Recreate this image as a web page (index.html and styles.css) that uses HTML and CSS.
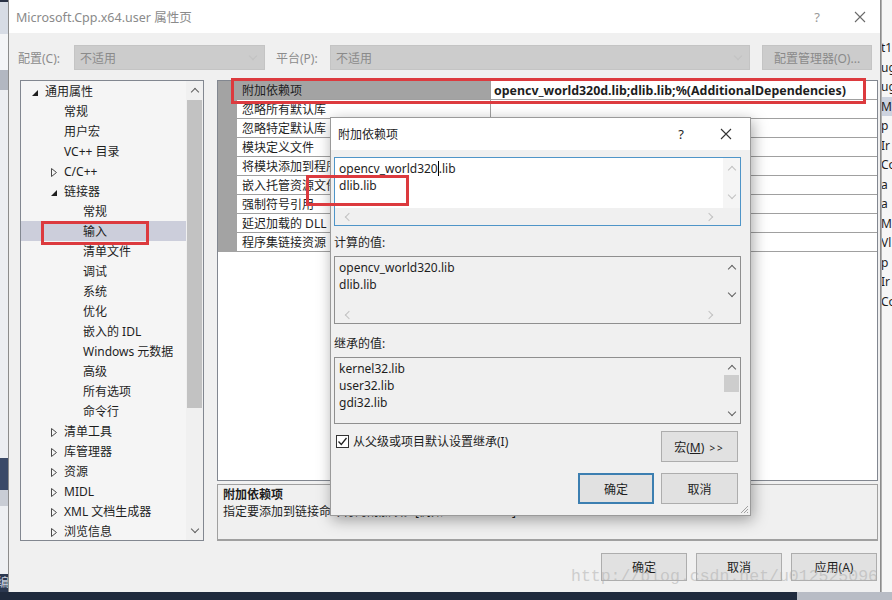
FILE: index.html
```html
<!DOCTYPE html>
<html lang="zh-CN">
<head>
    <meta charset="UTF-8">
    <title>Microsoft.Cpp.x64.user 属性页</title>
    <link rel="stylesheet" href="styles.css">
</head>
<body>
    <div class="desk">
        <div class="side-left"><span class="side-char">编</span></div>

        <!-- 属性页主窗口 -->
        <div class="win">
            <div class="titlebar">
                <span class="title">Microsoft.Cpp.x64.user 属性页</span>
                <span class="tb-help">?</span>
                <span class="tb-close">
                    <svg width="12" height="12" viewBox="0 0 12 12"><path d="M1 1L11 11M11 1L1 11" stroke="#6a6a6a" stroke-width="1.1" fill="none"/></svg>
                </span>
            </div>

            <div class="config-row">
                <span class="cfg-label">配置(C):</span>
                <div class="combo combo-config"><span>不适用</span><i class="chev chev-down chev-faint"></i></div>
                <span class="cfg-label cfg-label-p">平台(P):</span>
                <div class="combo combo-platform"><span>不适用</span><i class="chev chev-down chev-faint"></i></div>
                <button class="btn btn-off">配置管理器(O)...</button>
            </div>

            <div class="main">
                <div class="tree">
                    <ul class="tree-list">
                        <li class="lv0"><span class="slot"><i class="tri-open"></i></span>通用属性</li>
                        <li class="lv1"><span class="slot"></span>常规</li>
                        <li class="lv1"><span class="slot"></span>用户宏</li>
                        <li class="lv1"><span class="slot"></span>VC++ 目录</li>
                        <li class="lv1"><span class="slot"><svg class="tri-closed" width="6" height="9" viewBox="0 0 6 9"><path d="M0.5 0.5V8.5L5.5 4.5Z"/></svg></span>C/C++</li>
                        <li class="lv1"><span class="slot"><i class="tri-open"></i></span>链接器</li>
                        <li class="lv2"><span class="slot"></span>常规</li>
                        <li class="lv2 selected"><span class="slot"></span>输入</li>
                        <li class="lv2"><span class="slot"></span>清单文件</li>
                        <li class="lv2"><span class="slot"></span>调试</li>
                        <li class="lv2"><span class="slot"></span>系统</li>
                        <li class="lv2"><span class="slot"></span>优化</li>
                        <li class="lv2"><span class="slot"></span>嵌入的 IDL</li>
                        <li class="lv2"><span class="slot"></span>Windows 元数据</li>
                        <li class="lv2"><span class="slot"></span>高级</li>
                        <li class="lv2"><span class="slot"></span>所有选项</li>
                        <li class="lv2"><span class="slot"></span>命令行</li>
                        <li class="lv1"><span class="slot"><svg class="tri-closed" width="6" height="9" viewBox="0 0 6 9"><path d="M0.5 0.5V8.5L5.5 4.5Z"/></svg></span>清单工具</li>
                        <li class="lv1"><span class="slot"><svg class="tri-closed" width="6" height="9" viewBox="0 0 6 9"><path d="M0.5 0.5V8.5L5.5 4.5Z"/></svg></span>库管理器</li>
                        <li class="lv1"><span class="slot"><svg class="tri-closed" width="6" height="9" viewBox="0 0 6 9"><path d="M0.5 0.5V8.5L5.5 4.5Z"/></svg></span>资源</li>
                        <li class="lv1"><span class="slot"><svg class="tri-closed" width="6" height="9" viewBox="0 0 6 9"><path d="M0.5 0.5V8.5L5.5 4.5Z"/></svg></span>MIDL</li>
                        <li class="lv1"><span class="slot"><svg class="tri-closed" width="6" height="9" viewBox="0 0 6 9"><path d="M0.5 0.5V8.5L5.5 4.5Z"/></svg></span>XML 文档生成器</li>
                        <li class="lv1"><span class="slot"><svg class="tri-closed" width="6" height="9" viewBox="0 0 6 9"><path d="M0.5 0.5V8.5L5.5 4.5Z"/></svg></span>浏览信息</li>
                    </ul>
                    <div class="tree-scroll">
                        <span class="sb-btn"><i class="chev chev-up"></i></span>
                        <span class="tree-thumb"></span>
                        <span class="tree-track"></span>
                        <span class="sb-btn"><i class="chev chev-down"></i></span>
                    </div>
                </div>

                <div class="props">
                    <div class="grid">
                        <div class="prow sel"><span class="gut"></span><span class="pname">附加依赖项</span><span class="pval">opencv_world320d.lib;dlib.lib;%(AdditionalDependencies)</span></div>
                        <div class="prow"><span class="gut"></span><span class="pname">忽略所有默认库</span><span class="pval"></span></div>
                        <div class="prow"><span class="gut"></span><span class="pname">忽略特定默认库</span><span class="pval"></span></div>
                        <div class="prow"><span class="gut"></span><span class="pname">模块定义文件</span><span class="pval"></span></div>
                        <div class="prow"><span class="gut"></span><span class="pname">将模块添加到程序集</span><span class="pval"></span></div>
                        <div class="prow"><span class="gut"></span><span class="pname">嵌入托管资源文件</span><span class="pval"></span></div>
                        <div class="prow"><span class="gut"></span><span class="pname">强制符号引用</span><span class="pval"></span></div>
                        <div class="prow"><span class="gut"></span><span class="pname">延迟加载的 DLL</span><span class="pval"></span></div>
                        <div class="prow"><span class="gut"></span><span class="pname">程序集链接资源</span><span class="pval"></span></div>
                    </div>
                    <div class="desc">
                        <div class="desc-title">附加依赖项</div>
                        <div>指定要添加到链接命令行的附加项。[例如 kernel32.lib]</div>
                    </div>
                </div>
            </div>

            <div class="footer">
                <button class="btn">确定</button>
                <button class="btn">取消</button>
                <button class="btn">应用(A)</button>
            </div>
        </div>

        <div class="side-right">
            <span>t1</span><span>ug</span><span>ug</span><span class="hl">Mi</span><span>p</span><span>Ir</span><span>Co</span>
            <span>a</span><span>a</span><span>Mi</span><span>Vl</span><span>p</span><span>Ir</span><span>Co</span>
        </div>
    </div>
    <div class="taskbar"></div>

    <!-- 附加依赖项 弹出对话框 -->
    <div class="dlg">
        <div class="dlg-title">
            <span>附加依赖项</span>
            <span class="dlg-help">?</span>
            <span class="dlg-close">
                <svg width="12" height="12" viewBox="0 0 12 12"><path d="M1 1L11 11M11 1L1 11" stroke="#333" stroke-width="1.1" fill="none"/></svg>
            </span>
        </div>
        <div class="dlg-body">
            <div class="lbox lbox-edit">
                <div class="lb-text">opencv_world320<span class="caret"></span>.lib<br>dlib.lib</div>
                <div class="lb-vbar"><i class="chev chev-up chev-faint"></i><i class="chev chev-down chev-faint"></i></div>
                <div class="lb-hbar"><i class="chev chev-left chev-faint"></i><i class="chev chev-right chev-faint"></i></div>
                <div class="lb-corner"></div>
            </div>

            <div class="dlg-label">计算的值:</div>
            <div class="lbox lbox-ro">
                <div class="lb-text">opencv_world320.lib<br>dlib.lib</div>
                <div class="lb-vbar"><i class="chev chev-up"></i><i class="chev chev-down"></i></div>
                <div class="lb-hbar"><i class="chev chev-left chev-faint"></i><i class="chev chev-right chev-faint"></i></div>
                <div class="lb-corner"></div>
            </div>

            <div class="dlg-label dlg-label-2">继承的值:</div>
            <div class="lbox lbox-inh">
                <div class="lb-text">kernel32.lib<br>user32.lib<br>gdi32.lib</div>
                <div class="lb-vbar lb-vbar-thumb">
                    <i class="chev chev-up"></i>
                    <span class="inh-thumb"></span>
                    <span class="inh-track"></span>
                    <i class="chev chev-down"></i>
                </div>
            </div>

            <div class="dlg-check-row">
                <label class="chk">
                    <span class="chk-box"><svg width="11" height="11" viewBox="0 0 11 11"><path d="M1.5 5.5L4.3 8.5L9.5 2" stroke="#222" stroke-width="1.3" fill="none"/></svg></span>
                    从父级或项目默认设置继承(I)
                </label>
                <button class="btn dbtn">宏(<u>M</u>) <span class="gt">&gt;&gt;</span></button>
            </div>

            <div class="dlg-buttons">
                <button class="btn dbtn dbtn-default">确定</button>
                <button class="btn dbtn">取消</button>
            </div>
        </div>
        <svg class="grip" width="10" height="10" viewBox="0 0 10 10">
            <path d="M9 2L2 9M9 5L5 9M9 8L8 9" stroke="#a0a0a0" stroke-width="1" fill="none"/>
        </svg>
    </div>

    <!-- 红色标注 -->
    <div class="mark mark-tree"></div>
    <div class="mark mark-grid"></div>
    <div class="mark mark-edit"></div>

    <div class="watermark">http://blog.csdn.net/u012525096</div>
</body>
</html>
```

FILE: styles.css
```css
* {
    box-sizing: border-box;
}

body {
    margin: 0;
    width: 892px;
    height: 600px;
    overflow: hidden;
    position: relative;
    font-family: "Noto Sans", "Noto Sans CJK SC", sans-serif;
    font-size: 12px;
    color: #1e1e1e;
    background: #1f2a3d;
}

ul {
    list-style: none;
    margin: 0;
    padding: 0;
}

button {
    font-family: inherit;
    font-size: 12px;
    color: #1e1e1e;
}

.desk {
    display: flex;
    height: 592px;
}

/* 两侧露出的背景窗口 */
.side-left {
    width: 8px;
    overflow: hidden;
    display: flex;
    align-items: flex-end;
    background: linear-gradient(to bottom,
        #2a3346 0, #2a3346 2px,
        #d7dce5 2px, #d7dce5 34px,
        #f4f5f7 34px, #f4f5f7 70px,
        #b2b7c1 70px, #b2b7c1 90px,
        #eceef2 90px, #eceef2 458px,
        #3b4a68 458px, #3b4a68 490px,
        #c9cdd5 490px, #c9cdd5 506px,
        #eef0f3 506px, #eef0f3 574px,
        #2b3850 574px);
}

.side-char {
    color: #c8cfdc;
    font-size: 12px;
    line-height: 18px;
    margin-left: -3px;
}

.side-right {
    flex: 1;
    overflow: hidden;
    background: #f6f6f6;
    border-left: 1px solid #b0b0b0;
    padding-top: 38px;
    display: flex;
    flex-direction: column;
}

.side-right span {
    height: 19.5px;
    line-height: 19.5px;
    margin-left: -1px;
    white-space: nowrap;
}

.side-right .hl {
    background: #cdd3df;
}

.taskbar {
    height: 8px;
    background: linear-gradient(to right, #1f2a3d 0, #1f2a3d 797px, #b8bcc5 797px);
}

/* 主窗口 */
.win {
    width: 873px;
    background: #f0f0f0;
    border-left: 1px solid #8c8c8c;
    border-right: 1px solid #8c8c8c;
    display: flex;
    flex-direction: column;
}

.titlebar {
    height: 33px;
    background: #fff;
    display: flex;
    align-items: center;
    padding-left: 7px;
}

.title {
    color: #8a8a8a;
    font-size: 12.5px;
}

.tb-help {
    margin-left: auto;
    width: 44px;
    text-align: center;
    color: #999;
    font-size: 13px;
}

.tb-close {
    width: 41px;
    display: flex;
    justify-content: center;
}

.config-row {
    margin-top: 12px;
    height: 25px;
    display: flex;
    align-items: center;
    padding-left: 9px;
}

.cfg-label {
    width: 56px;
    color: #8c8c8c;
}

.cfg-label-p {
    width: 54px;
    margin-left: 11px;
}

.combo {
    height: 25px;
    background: #cccccc;
    border: 1px solid #c4c4c4;
    color: #8a8a8a;
    display: flex;
    align-items: center;
    justify-content: space-between;
    padding: 0 8px 0 5px;
}

.combo-config {
    width: 191px;
}

.combo-platform {
    width: 420px;
}

.btn {
    background: #e1e1e1;
    border: 1px solid #adadad;
    padding: 0;
}

.btn-off {
    margin-left: 12px;
    width: 110px;
    height: 25px;
    background: #cccccc;
    border-color: #c4c4c4;
    color: #8a8a8a;
}

/* 小箭头 */
.chev {
    display: inline-block;
    width: 6px;
    height: 6px;
    border-left: 1.4px solid #606060;
    border-top: 1.4px solid #606060;
}

.chev-faint {
    border-color: #c2c2c2;
}

.chev-up {
    transform: rotate(45deg);
    margin-top: 3px;
}

.chev-down {
    transform: rotate(225deg);
    margin-bottom: 3px;
}

.chev-left {
    transform: rotate(-45deg);
    margin-left: 3px;
}

.chev-right {
    transform: rotate(135deg);
    margin-right: 3px;
}

.main {
    margin-top: 10px;
    height: 461px;
    display: flex;
    gap: 13px;
    padding-left: 11px;
}

/* 左侧树 */
.tree {
    width: 184px;
    border: 1px solid #828790;
    background: #f5f5f5;
    display: flex;
    overflow: hidden;
}

.tree-list {
    flex: 1;
    overflow: hidden;
}

.tree-list li {
    height: 20px;
    line-height: 20px;
    padding-top: 1px;
    display: flex;
    align-items: center;
    white-space: nowrap;
}

.tree-list .lv0 { padding-left: 5px; }
.tree-list .lv1 { padding-left: 24px; }
.tree-list .lv2 { padding-left: 43px; }

.tree-list .selected {
    background: #cccedb;
}

.slot {
    width: 19px;
    height: 19px;
    display: flex;
    align-items: center;
    padding-left: 6px;
}

.tri-open {
    width: 0;
    height: 0;
    border-left: 6px solid transparent;
    border-bottom: 6px solid #1e1e1e;
    margin-top: 2px;
}

.tri-closed {
    fill: none;
    stroke: #4a4a4a;
    stroke-width: 1;
    margin-top: 1px;
}

.tree-scroll {
    width: 17px;
    display: flex;
    flex-direction: column;
    background: #f0f0f0;
}

.sb-btn {
    height: 19px;
    display: flex;
    align-items: center;
    justify-content: center;
}

.tree-thumb {
    height: 308px;
    margin: 0 1px;
    background: #c2c2c2;
}

.tree-track {
    flex: 1;
}

/* 属性表 */
.props {
    width: 661px;
    display: flex;
    flex-direction: column;
    gap: 3px;
}

.grid {
    height: 401px;
    border: 1px solid #828790;
    background: #fff;
}

.prow {
    display: flex;
    height: 19px;
}

.gut {
    width: 19px;
    background: #a3a3a3;
}

.pname {
    width: 254px;
    padding: 1px 0 0 5px;
    line-height: 17px;
    border-right: 1px solid #a0a0a0;
    border-bottom: 1px solid #a0a0a0;
    white-space: nowrap;
    overflow: hidden;
}

.pval {
    flex: 1;
    padding: 1px 0 0 3px;
    line-height: 17px;
    border-bottom: 1px solid #a0a0a0;
    font-weight: bold;
    font-size: 12.4px;
    white-space: nowrap;
}

.prow.sel .pname {
    background: #a3a3a3;
}

.desc {
    height: 57px;
    border: 1px solid #a0a0a0;
    border-bottom-width: 2px;
    padding: 1px 5px;
    line-height: 17px;
    white-space: nowrap;
    overflow: hidden;
}

.desc-title {
    font-weight: bold;
}

.footer {
    margin-top: 12px;
    height: 28px;
    display: flex;
    justify-content: flex-end;
    gap: 9px;
    padding-right: 3px;
}

.footer .btn {
    width: 86px;
}

/* 弹出对话框 */
.dlg {
    position: absolute;
    left: 330px;
    top: 117px;
    width: 421px;
    height: 399px;
    background: #f0f0f0;
    border: 1px solid #9a9a9a;
    box-shadow: 2px 4px 14px rgba(0, 0, 0, 0.35);
}

.dlg-title {
    height: 32px;
    background: #fff;
    display: flex;
    align-items: center;
    padding-left: 7px;
}

.dlg-help {
    margin-left: auto;
    width: 42px;
    text-align: center;
    font-size: 13px;
}

.dlg-close {
    width: 48px;
    display: flex;
    justify-content: center;
}

.dlg-body {
    padding: 7px 9px 0 3px;
}

.lbox {
    display: grid;
    grid-template-columns: 1fr 17px;
    grid-template-rows: 1fr 17px;
    border: 1px solid #8f8f8f;
    background: #f0f0f0;
}

.lbox-edit {
    height: 69px;
    border-color: #4f95c8;
    background: #fff;
}

.lbox-ro {
    height: 68px;
}

.lbox-inh {
    height: 67px;
    grid-template-rows: 1fr;
}

.lb-text {
    padding: 2px 4px;
    line-height: 17px;
    white-space: nowrap;
}

.caret {
    display: inline-block;
    width: 0;
    height: 15px;
    border-left: 1px solid #000;
    vertical-align: -3px;
}

.lb-vbar {
    display: flex;
    flex-direction: column;
    align-items: center;
    justify-content: space-between;
    padding: 6px 0 7px;
    background: #f5f5f5;
}

.lbox-ro .lb-vbar,
.lbox-inh .lb-vbar {
    background: #f0f0f0;
}

.lb-vbar-thumb {
    justify-content: flex-start;
    align-items: stretch;
    padding: 0;
}

.lb-vbar-thumb .chev {
    align-self: center;
    margin: 8px 0 0;
}

.lb-vbar-thumb .chev-down {
    margin: 0 0 8px;
}

.inh-thumb {
    height: 17px;
    margin: 3px 1px 0;
    background: #cdcdcd;
}

.inh-track {
    flex: 1;
}

.lb-hbar {
    display: flex;
    align-items: center;
    justify-content: space-between;
    padding: 0 8px;
    background: #f0f0f0;
}

.lb-corner {
    background: #f0f0f0;
}

.dlg-label {
    margin-top: 8px;
    margin-bottom: 5px;
    line-height: 17px;
}

.dlg-label-2 {
    margin-top: 11px;
}

.dlg-check-row {
    margin-top: 7px;
    height: 31px;
    display: flex;
    justify-content: space-between;
    padding-right: 3px;
}

.chk {
    display: flex;
    align-items: center;
    gap: 4px;
    height: 20px;
    padding-left: 2px;
}

.chk-box {
    width: 13px;
    height: 13px;
    border: 1px solid #333;
    background: #fff;
    display: flex;
    align-items: center;
    justify-content: center;
}

.dbtn {
    width: 77px;
    height: 31px;
}

.gt {
    font-size: 10px;
    letter-spacing: 2px;
    margin-left: 2px;
}

.dlg-buttons {
    margin-top: 11px;
    display: flex;
    justify-content: flex-end;
    gap: 7px;
    padding-right: 3px;
}

.dbtn-default {
    width: 76px;
    border: 2px solid #3c7fb1;
}

.grip {
    position: absolute;
    right: 1px;
    bottom: 1px;
}

/* 红色标注 */
.mark {
    position: absolute;
    border: 3px solid #dc3a3e;
}

.mark-tree {
    left: 41px;
    top: 221px;
    width: 108px;
    height: 24px;
}

.mark-grid {
    left: 231px;
    top: 78px;
    width: 635px;
    height: 26px;
}

.mark-edit {
    left: 306px;
    top: 175px;
    width: 103px;
    height: 31px;
}

.watermark {
    position: absolute;
    left: 571px;
    top: 566px;
    font-family: "Liberation Mono", monospace;
    font-size: 16.5px;
    line-height: 22px;
    color: rgba(175, 175, 175, 0.55);
    white-space: nowrap;
}
```
